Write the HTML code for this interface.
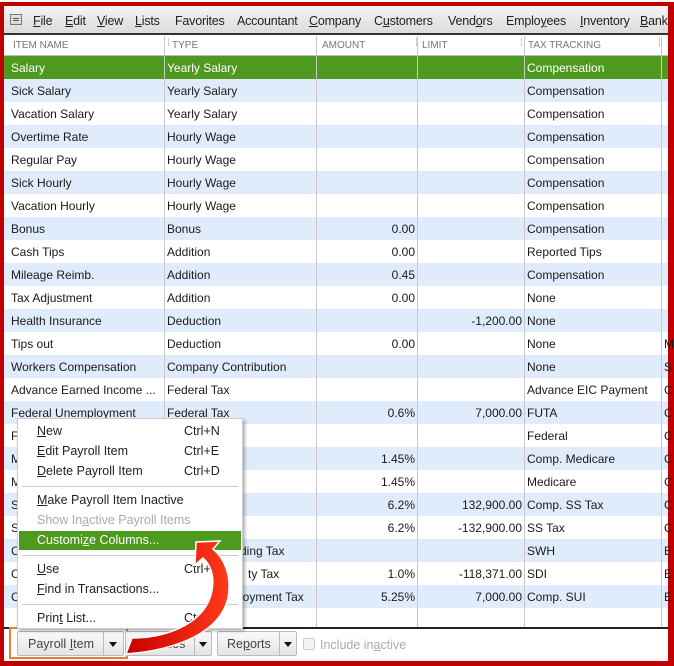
<!DOCTYPE html>
<html><head><style>
*{margin:0;padding:0;box-sizing:border-box}
body{width:674px;height:666px;background:#fff;font-family:"Liberation Sans",sans-serif;font-size:12px;color:#1a1a1a;position:relative;overflow:hidden}
.frame{position:absolute;left:0;top:2px;width:674px;height:664px;border:4px solid #c00000;border-right-width:6px;border-bottom-width:5px}
.menubar{position:absolute;left:4px;top:6px;width:664px;height:29px;background:linear-gradient(#f4f4f4,#dcdcdc);border-bottom:2px solid #333;white-space:nowrap;overflow:hidden}
.menubar span{position:absolute;top:8px;font-size:12.5px;color:#222;letter-spacing:-0.2px}
.hdr{position:absolute;left:4px;top:36px;width:664px;height:20px;background:#fff;border-bottom:1px solid #bbb}
.hdr span{position:absolute;top:4px;font-size:10px;color:#777}
.hdr i{position:absolute;top:2px;font-style:normal;color:#999;font-size:10px}
.row{position:absolute;left:4px;width:664px;height:23px}
.row span{position:absolute;top:5px;white-space:nowrap}
.vl{position:absolute;top:36px;width:1px;height:591px;background:#c8c8c8}
.bottom{position:absolute;left:4px;top:627px;width:664px;height:2px;background:#222}
.btn{position:absolute;top:631px;height:25px;border:1px solid #bbb;border-radius:2px;background:linear-gradient(#fafafa,#e4e4e4);font-size:12.5px;color:#444}
.btn b{font-weight:normal;position:absolute;top:5px}
.btn em{position:absolute;top:0;width:1px;height:23px;background:#bbb}
.tri{position:absolute;top:10px;width:0;height:0;border-left:4px solid transparent;border-right:4px solid transparent;border-top:5px solid #111}
.menu{position:absolute;left:17px;top:418px;width:226px;height:211px;background:#fff;border:1px solid #ccc;box-shadow:2px 2px 3px rgba(0,0,0,.3)}
.menu div{position:absolute;left:19px;font-size:12.5px;color:#222}
.menu .k{left:166px}
.sep{position:absolute;left:4px!important;width:216px;height:1px;background:#ccc}
</style></head><body>
<div class="frame"></div>
<div class="menubar">
<div style="position:absolute;left:6px;top:8px;width:12px;height:11px;border:1px solid #777;background:#ddd"><div style="margin:3px 2px;height:3px;border-top:1px solid #555;border-bottom:1px solid #555"></div></div>
<span style="left:29px"><u>F</u>ile</span><span style="left:61px"><u>E</u>dit</span><span style="left:93px"><u>V</u>iew</span><span style="left:131px"><u>L</u>ists</span><span style="left:171px">Favorites</span><span style="left:233px">Accountant</span><span style="left:305px"><u>C</u>ompany</span><span style="left:370px">C<u>u</u>stomers</span><span style="left:444px">Vend<u>o</u>rs</span><span style="left:502px">Emplo<u>y</u>ees</span><span style="left:576px"><u>I</u>nventory</span><span style="left:636px"><u>B</u>anking</span>
</div>
<div class="hdr">
<span style="left:9px">ITEM NAME</span><i style="left:163px">⁞</i><span style="left:168px">TYPE</span><i style="left:311px">⁞</i><span style="left:318px">AMOUNT</span><i style="left:411px">⁞</i><span style="left:418px">LIMIT</span><i style="left:516px">⁞</i><span style="left:524px">TAX TRACKING</span><i style="left:654px">⁞</i>
</div>
<div id="rows"></div>
<div class="vl" style="left:164px"></div><div class="vl" style="left:316px"></div><div class="vl" style="left:417px"></div><div class="vl" style="left:524px"></div><div class="vl" style="left:661px"></div>
<div class="bottom"></div>
<div style="position:absolute;left:9px;top:627px;width:119px;height:32px;border:2px solid #ef7d2c"></div>
<div class="btn" style="left:17px;width:107px"><b style="left:10px">Payroll <u>I</u>tem</b><em style="left:85px"></em><span class="tri" style="left:91px"></span></div>
<div class="btn" style="left:125px;width:87px"><b style="left:10px">Activities</b><em style="left:68px"></em><span class="tri" style="left:73px"></span></div>
<div class="btn" style="left:217px;width:80px"><b style="left:9px">Re<u>p</u>orts</b><em style="left:61px"></em><span class="tri" style="left:66px"></span></div>
<div style="position:absolute;left:303px;top:638px;width:12px;height:12px;border:1px solid #ccc;border-radius:2px;background:#f4f4f4"></div>
<div style="position:absolute;left:320px;top:638px;font-size:12.5px;color:#aaa">Include in<u>a</u>ctive</div>
<div class="menu">
<div style="top:5px"><u>N</u>ew</div><div class="k" style="top:5px">Ctrl+N</div>
<div style="top:25px"><u>E</u>dit Payroll Item</div><div class="k" style="top:25px">Ctrl+E</div>
<div style="top:45px"><u>D</u>elete Payroll Item</div><div class="k" style="top:45px">Ctrl+D</div>
<div class="sep" style="top:67px"></div>
<div style="top:74px"><u>M</u>ake Payroll Item Inactive</div>
<div style="top:94px;color:#aaa">Show In<u>a</u>ctive Payroll Items</div>
<div style="left:1px;top:112px;width:222px;height:19px;background:#4e9a1e"></div>
<div style="top:114px;color:#fff">Customi<u>z</u>e Columns...</div>
<div class="sep" style="top:136px"></div>
<div style="top:143px"><u>U</u>se</div><div class="k" style="top:143px">Ctrl+U</div>
<div style="top:163px"><u>F</u>ind in Transactions...</div>
<div class="sep" style="top:185px"></div>
<div style="top:192px">Prin<u>t</u> List...</div><div class="k" style="top:192px">Ctrl+P</div>
</div>
<svg style="position:absolute;left:0;top:0" width="674" height="666">
<defs><linearGradient id="g" x1="0" y1="0" x2="1" y2="0"><stop offset="0" stop-color="#c80000"/><stop offset="1" stop-color="#ff3a1a"/></linearGradient></defs>
<path d="M126,654 L132,638 C165,638 200,625 210,598 C216,580 212,566 203,558 L195,565 L196,542 L220,541 L213,549 C224,558 232,575 228,598 C220,632 178,650 126,654 Z" fill="url(#g)" stroke="#fff" stroke-width="1.5"/>
</svg>
<script>
var d=[["Salary","Yearly Salary","","","Compensation",""],["Sick Salary","Yearly Salary","","","Compensation",""],["Vacation Salary","Yearly Salary","","","Compensation",""],["Overtime Rate","Hourly Wage","","","Compensation",""],["Regular Pay","Hourly Wage","","","Compensation",""],["Sick Hourly","Hourly Wage","","","Compensation",""],["Vacation Hourly","Hourly Wage","","","Compensation",""],["Bonus","Bonus","0.00","","Compensation",""],["Cash Tips","Addition","0.00","","Reported Tips",""],["Mileage Reimb.","Addition","0.45","","Compensation",""],["Tax Adjustment","Addition","0.00","","None",""],["Health Insurance","Deduction","","-1,200.00","None",""],["Tips out","Deduction","0.00","","None","M"],["Workers Compensation","Company Contribution","","","None","S"],["Advance Earned Income ...","Federal Tax","","","Advance EIC Payment","C"],["Federal Unemployment","Federal Tax","0.6%","7,000.00","FUTA","C"],["F","","","","Federal","C"],["M","","1.45%","","Comp. Medicare","C"],["M","","1.45%","","Medicare","C"],["S","","6.2%","132,900.00","Comp. SS Tax","C"],["S","","6.2%","-132,900.00","SS Tax","C"],["C","Withholding Tax","","","SWH","E"],["C","Disability Tax","","","SDI","E"],["C","Unemployment Tax","5.25%","7,000.00","Comp. SUI","E"],["","","","","",""]];
d[21][1]="ding Tax";d[22][1]="ty Tax";d[22][2]="1.0%";d[22][3]="-118,371.00";d[23][1]="loyment Tax";
var h="";for(var i=0;i<d.length;i++){var r=d[i],bg=i==0?"#4e9a1e":(i%2?"#e0ecfb":"#fff"),c=i==0?"color:#fff;":"";
var tl=[0,0,0,0,0];if(i==21)tl[1]=236;if(i==22)tl[1]=244;if(i==23)tl[1]=236;
h+='<div class="row" style="top:'+(56+i*23)+'px;background:'+bg+';'+c+'"><span style="left:7px">'+r[0]+'</span><span style="left:'+(tl[1]||163)+'px">'+r[1]+'</span><span style="right:'+(664-411)+'px">'+r[2]+'</span><span style="right:'+(664-518)+'px">'+r[3]+'</span><span style="left:523px">'+r[4]+'</span><span style="left:660px">'+r[5]+'</span></div>';}
document.getElementById("rows").innerHTML=h;
</script>
</body></html>
